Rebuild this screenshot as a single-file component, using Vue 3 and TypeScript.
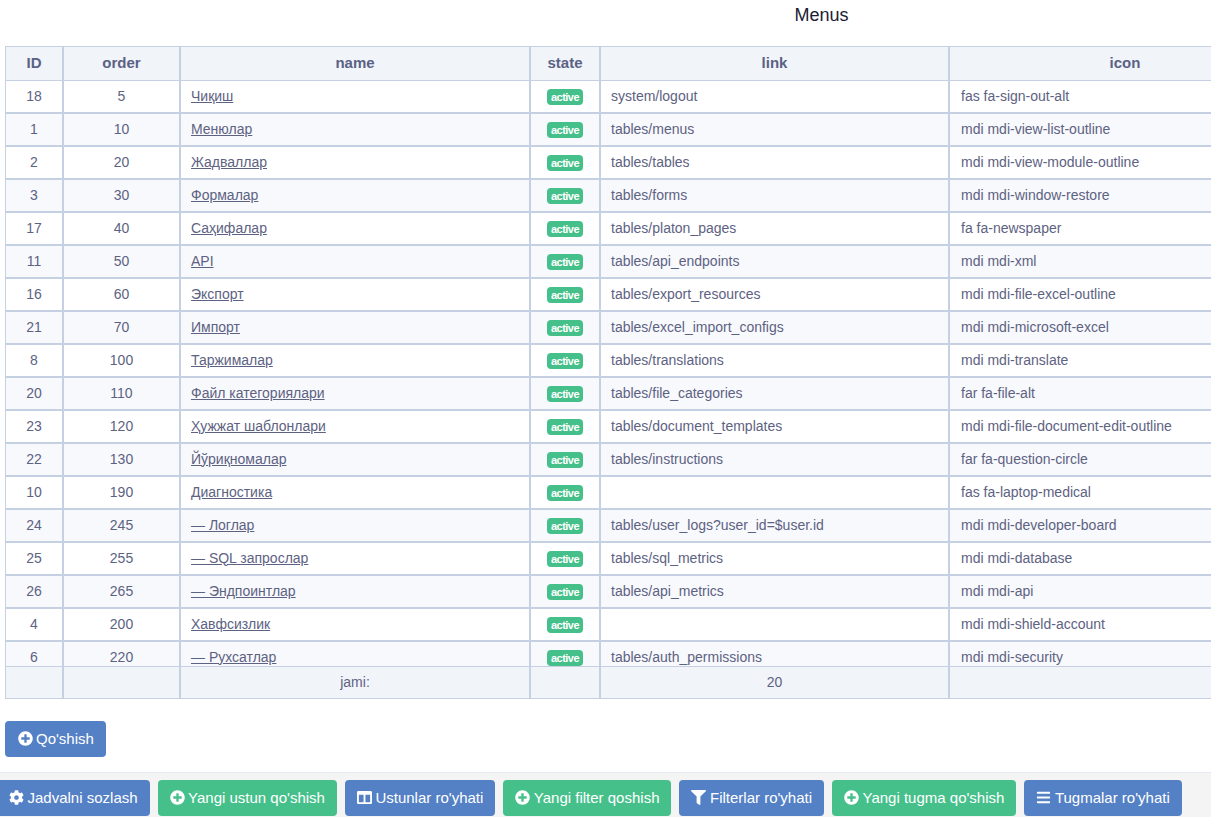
<script setup lang="ts">
interface MenuRow { id: number; order: number; name: string; link: string; icon: string }
interface ToolButton { label: string; tone: 'blue' | 'green'; icon: keyof typeof icons }

const icons = {
  plus: { box: '0 0 512 512', d: 'M256 8C119 8 8 119 8 256s111 248 248 248 248-111 248-248S393 8 256 8zm144 276c0 6.6-5.4 12-12 12h-92v92c0 6.6-5.4 12-12 12h-56c-6.6 0-12-5.4-12-12v-92h-92c-6.6 0-12-5.4-12-12v-56c0-6.6 5.4-12 12-12h92v-92c0-6.6 5.4-12 12-12h56c6.6 0 12 5.4 12 12v92h92c6.6 0 12 5.4 12 12v56z' },
  cog: { box: '0 0 512 512', d: 'M487.4 315.7l-42.6-24.6c4.3-23.2 4.3-47 0-70.2l42.6-24.6c4.9-2.8 7.1-8.6 5.5-14-11.1-35.6-30-67.8-54.7-94.6-3.8-4.1-10-5.1-14.8-2.3L380.8 110c-17.9-15.4-38.5-27.3-60.8-35.1V25.8c0-5.6-3.9-10.5-9.4-11.7-36.7-8.2-74.3-7.8-109.2 0-5.5 1.2-9.4 6.1-9.4 11.7V75c-22.2 7.9-42.8 19.8-60.8 35.1L88.7 85.5c-4.9-2.8-11-1.9-14.8 2.3-24.7 26.7-43.6 58.9-54.7 94.6-1.7 5.4.6 11.2 5.5 14L67.3 221c-4.3 23.2-4.3 47 0 70.2l-42.6 24.6c-4.9 2.8-7.1 8.6-5.5 14 11.1 35.6 30 67.8 54.7 94.6 3.8 4.1 10 5.1 14.8 2.3l42.6-24.6c17.9 15.4 38.5 27.3 60.8 35.1v49.2c0 5.6 3.9 10.5 9.4 11.7 36.7 8.2 74.3 7.8 109.2 0 5.5-1.2 9.4-6.1 9.4-11.7v-49.2c22.2-7.9 42.8-19.8 60.8-35.1l42.6 24.6c4.9 2.8 11 1.9 14.8-2.3 24.7-26.7 43.6-58.9 54.7-94.6 1.5-5.5-.7-11.3-5.6-14.1zM256 336c-44.1 0-80-35.9-80-80s35.9-80 80-80 80 35.9 80 80-35.9 80-80 80z' },
  columns: { box: '0 0 512 512', d: 'M464 32H48C21.49 32 0 53.49 0 80v352c0 26.51 21.49 48 48 48h416c26.51 0 48-21.49 48-48V80c0-26.51-21.49-48-48-48zM224 416H64V160h160v256zm224 0H288V160h160v256z' },
  filter: { box: '0 0 512 512', d: 'M487.976 0H24.028C2.71 0-8.047 25.866 7.058 40.971L192 225.941V432c0 7.831 3.821 15.17 10.237 19.662l80 55.98C298.02 518.69 320 507.493 320 487.98V225.941l184.947-184.97C520.021 25.896 509.338 0 487.976 0z' },
  bars: { box: '0 0 448 512', d: 'M16 132h416c8.837 0 16-7.163 16-16V76c0-8.837-7.163-16-16-16H16C7.163 60 0 67.163 0 76v40c0 8.837 7.163 16 16 16zm0 160h416c8.837 0 16-7.163 16-16v-40c0-8.837-7.163-16-16-16H16c-8.837 0-16 7.163-16 16v40c0 8.837 7.163 16 16 16zm0 160h416c8.837 0 16-7.163 16-16v-40c0-8.837-7.163-16-16-16H16c-8.837 0-16 7.163-16 16v40c0 8.837 7.163 16 16 16z' },
}

const rows: MenuRow[] = [
  { id: 18, order: 5, name: 'Чиқиш', link: 'system/logout', icon: 'fas fa-sign-out-alt' },
  { id: 1, order: 10, name: 'Менюлар', link: 'tables/menus', icon: 'mdi mdi-view-list-outline' },
  { id: 2, order: 20, name: 'Жадваллар', link: 'tables/tables', icon: 'mdi mdi-view-module-outline' },
  { id: 3, order: 30, name: 'Формалар', link: 'tables/forms', icon: 'mdi mdi-window-restore' },
  { id: 17, order: 40, name: 'Саҳифалар', link: 'tables/platon_pages', icon: 'fa fa-newspaper' },
  { id: 11, order: 50, name: 'API', link: 'tables/api_endpoints', icon: 'mdi mdi-xml' },
  { id: 16, order: 60, name: 'Экспорт', link: 'tables/export_resources', icon: 'mdi mdi-file-excel-outline' },
  { id: 21, order: 70, name: 'Импорт', link: 'tables/excel_import_configs', icon: 'mdi mdi-microsoft-excel' },
  { id: 8, order: 100, name: 'Таржималар', link: 'tables/translations', icon: 'mdi mdi-translate' },
  { id: 20, order: 110, name: 'Файл категориялари', link: 'tables/file_categories', icon: 'far fa-file-alt' },
  { id: 23, order: 120, name: 'Ҳужжат шаблонлари', link: 'tables/document_templates', icon: 'mdi mdi-file-document-edit-outline' },
  { id: 22, order: 130, name: 'Йўриқномалар', link: 'tables/instructions', icon: 'far fa-question-circle' },
  { id: 10, order: 190, name: 'Диагностика', link: '', icon: 'fas fa-laptop-medical' },
  { id: 24, order: 245, name: '— Логлар', link: 'tables/user_logs?user_id=$user.id', icon: 'mdi mdi-developer-board' },
  { id: 25, order: 255, name: '— SQL запрослар', link: 'tables/sql_metrics', icon: 'mdi mdi-database' },
  { id: 26, order: 265, name: '— Эндпоинтлар', link: 'tables/api_metrics', icon: 'mdi mdi-api' },
  { id: 4, order: 200, name: 'Хавфсизлик', link: '', icon: 'mdi mdi-shield-account' },
  { id: 6, order: 220, name: '— Рухсатлар', link: 'tables/auth_permissions', icon: 'mdi mdi-security' },
]

const tools: ToolButton[] = [
  { label: 'Jadvalni sozlash', tone: 'blue', icon: 'cog' },
  { label: "Yangi ustun qo'shish", tone: 'green', icon: 'plus' },
  { label: "Ustunlar ro'yhati", tone: 'blue', icon: 'columns' },
  { label: 'Yangi filter qoshish', tone: 'green', icon: 'plus' },
  { label: "Filterlar ro'yhati", tone: 'blue', icon: 'filter' },
  { label: "Yangi tugma qo'shish", tone: 'green', icon: 'plus' },
  { label: "Tugmalar ro'yhati", tone: 'blue', icon: 'bars' },
]
</script>

<template>
  <div class="page">
    <main class="content">
      <h1 class="title">Menus</h1>
      <div class="table-wrap">
        <table class="grid">
          <colgroup>
            <col class="c-id" />
            <col class="c-order" />
            <col class="c-name" />
            <col class="c-state" />
            <col class="c-link" />
            <col class="c-icon" />
          </colgroup>
          <thead>
            <tr>
              <th>ID</th>
              <th>order</th>
              <th>name</th>
              <th>state</th>
              <th>link</th>
              <th>icon</th>
            </tr>
          </thead>
          <tbody>
            <tr v-for="row in rows" :key="row.id">
              <td class="center">{{ row.id }}</td>
              <td class="center">{{ row.order }}</td>
              <td><a class="name-link" href="#">{{ row.name }}</a></td>
              <td class="center"><span class="badge">active</span></td>
              <td>{{ row.link }}</td>
              <td>{{ row.icon }}</td>
            </tr>
          </tbody>
          <tfoot>
            <tr>
              <td></td>
              <td></td>
              <td class="center">jami:</td>
              <td></td>
              <td class="center">20</td>
              <td></td>
            </tr>
          </tfoot>
        </table>
      </div>
      <div class="actions">
        <button class="btn blue add" type="button">
          <svg class="ico" :viewBox="icons.plus.box" aria-hidden="true"><path :d="icons.plus.d" /></svg>
          <span>Qo'shish</span>
        </button>
      </div>
    </main>
    <footer class="toolbar">
      <button v-for="tool in tools" :key="tool.label" class="btn" :class="tool.tone" type="button">
        <svg class="ico" :viewBox="icons[tool.icon].box" aria-hidden="true"><path :d="icons[tool.icon].d" /></svg>
        <span>{{ tool.label }}</span>
      </button>
    </footer>
  </div>
</template>

<style>
html, body { margin: 0; height: 100%; overflow: hidden; background: #fff; }
</style>

<style scoped>
.page {
  width: 1211px;
  height: 817px;
  display: flex;
  flex-direction: column;
  overflow: hidden;
  font-family: "Liberation Sans", Arial, sans-serif;
  font-size: 14px;
  color: #5d6282;
}
.content {
  height: 772px;
  flex: none;
  box-sizing: border-box;
  padding: 0 0 0 5px;
  overflow: hidden;
}
.title {
  margin: 0 0 20px;
  padding-top: 5px;
  height: 21px;
  line-height: 21px;
  font-size: 18px;
  font-weight: 400;
  text-align: center;
  color: #1c1c33;
  padding-left: 427px;
}
.table-wrap {
  height: 653px;
  overflow: hidden;
  position: relative;
}
.grid {
  table-layout: fixed;
  width: 1295px;
  border-collapse: separate;
  border-spacing: 0;
  background: #fff;
}
.c-id { width: 59px; }
.c-order { width: 117px; }
.c-name { width: 350px; }
.c-state { width: 70px; }
.c-link { width: 349px; }
.c-icon { width: 350px; }
th, td {
  box-sizing: border-box;
  border-right: 2px solid #c5d0e3;
  border-bottom: 2px solid #c5d0e3;
  padding: 0 10px 2px;
  white-space: nowrap;
  overflow: hidden;
}
th:first-child, td:first-child { border-left: 1px solid #c5d0e3; }
td:last-child { padding-left: 11px; }
th:last-child { padding-left: 12px; }
th {
  position: sticky;
  top: 0;
  z-index: 2;
  height: 35px;
  background: #f1f4f9;
  border-top: 1px solid #c5d0e3;
  border-bottom-width: 1px;
  font-size: 15px;
  font-weight: 700;
  text-align: center;
  color: #5a6285;
}
tbody td { height: 33px; }
tbody tr:nth-child(even) td { background: #f8f9fd; }
tfoot td {
  position: sticky;
  bottom: 0;
  z-index: 2;
  height: 33px;
  background: #f1f4f9;
  border-top: 1px solid #c5d0e3;
  border-bottom-width: 1px;
}
.center { text-align: center; }
.name-link { color: #5d6282; text-decoration: underline; }
.badge {
  display: inline-block;
  width: 36px;
  height: 16px;
  margin-top: 2px;
  line-height: 16px;
  border-radius: 4px;
  background: #46c08a;
  color: #fff;
  font-size: 11px;
  font-weight: 700;
  letter-spacing: -0.5px;
  text-align: center;
  vertical-align: middle;
}
.actions { margin-top: 22px; }
.btn {
  display: inline-flex;
  align-items: center;
  flex: none;
  gap: 3.5px;
  height: 36px;
  box-sizing: border-box;
  padding: 0 12px 2px;
  border: 0;
  border-radius: 4px;
  color: #fff;
  font: 15px "Liberation Sans", Arial, sans-serif;
  white-space: nowrap;
}
.add { padding: 0 12.5px 2px; }
.blue { background: #5480c5; }
.green { background: #46c08a; }
.ico { width: 15px; height: 15px; fill: currentColor; flex: none; }
.toolbar {
  flex: 1;
  display: flex;
  gap: 8px;
  align-items: flex-start;
  box-sizing: border-box;
  padding: 7px 0 0 0;
  margin-left: -3px;
  background: #f4f4f4;
  border-top: 1px solid #e6ebf3;
}
</style>
